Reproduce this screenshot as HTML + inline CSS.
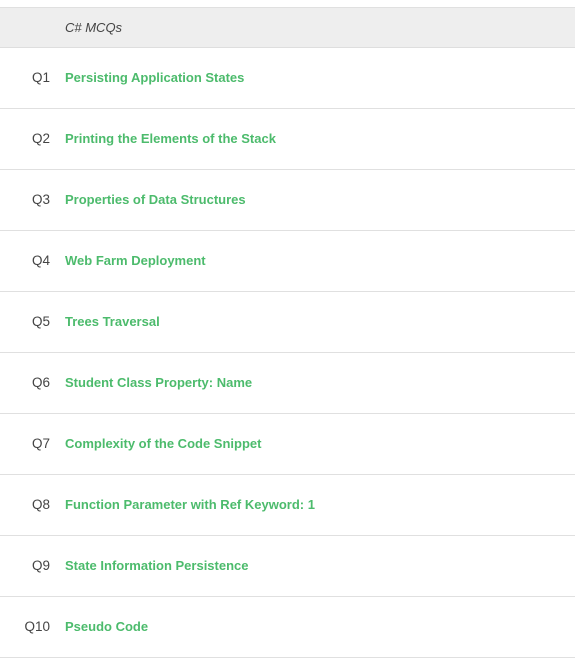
<!DOCTYPE html>
<html><head><style>
body{margin:0;width:575px;height:655px;overflow:hidden;background:#fff;font-family:"Liberation Sans",sans-serif;}
.hd{position:absolute;top:7px;left:0;width:575px;height:41px;background:#eeeeee;border-top:1px solid #e0e0e0;border-bottom:1px solid #dedede;box-sizing:border-box;}
.hd span{position:absolute;left:65px;top:12px;font-style:italic;font-size:13px;color:#444;}
.r{position:absolute;left:0;width:575px;height:61px;border-bottom:1px solid #e0e0e0;box-sizing:border-box;}
.r .n{position:absolute;right:525px;top:22px;font-size:13.5px;color:#444;}
.r .t{position:absolute;left:65px;top:22px;font-size:13px;font-weight:bold;color:#4cbb6c;}
</style></head><body>
<div class="hd"><span>C# MCQs</span></div>
<div class="r" style="top:48px"><span class="n">Q1</span><span class="t">Persisting Application States</span></div>
<div class="r" style="top:109px"><span class="n">Q2</span><span class="t">Printing the Elements of the Stack</span></div>
<div class="r" style="top:170px"><span class="n">Q3</span><span class="t">Properties of Data Structures</span></div>
<div class="r" style="top:231px"><span class="n">Q4</span><span class="t">Web Farm Deployment</span></div>
<div class="r" style="top:292px"><span class="n">Q5</span><span class="t">Trees Traversal</span></div>
<div class="r" style="top:353px"><span class="n">Q6</span><span class="t">Student Class Property: Name</span></div>
<div class="r" style="top:414px"><span class="n">Q7</span><span class="t">Complexity of the Code Snippet</span></div>
<div class="r" style="top:475px"><span class="n">Q8</span><span class="t">Function Parameter with Ref Keyword: 1</span></div>
<div class="r" style="top:536px"><span class="n">Q9</span><span class="t">State Information Persistence</span></div>
<div class="r" style="top:597px"><span class="n">Q10</span><span class="t">Pseudo Code</span></div>
</body></html>
